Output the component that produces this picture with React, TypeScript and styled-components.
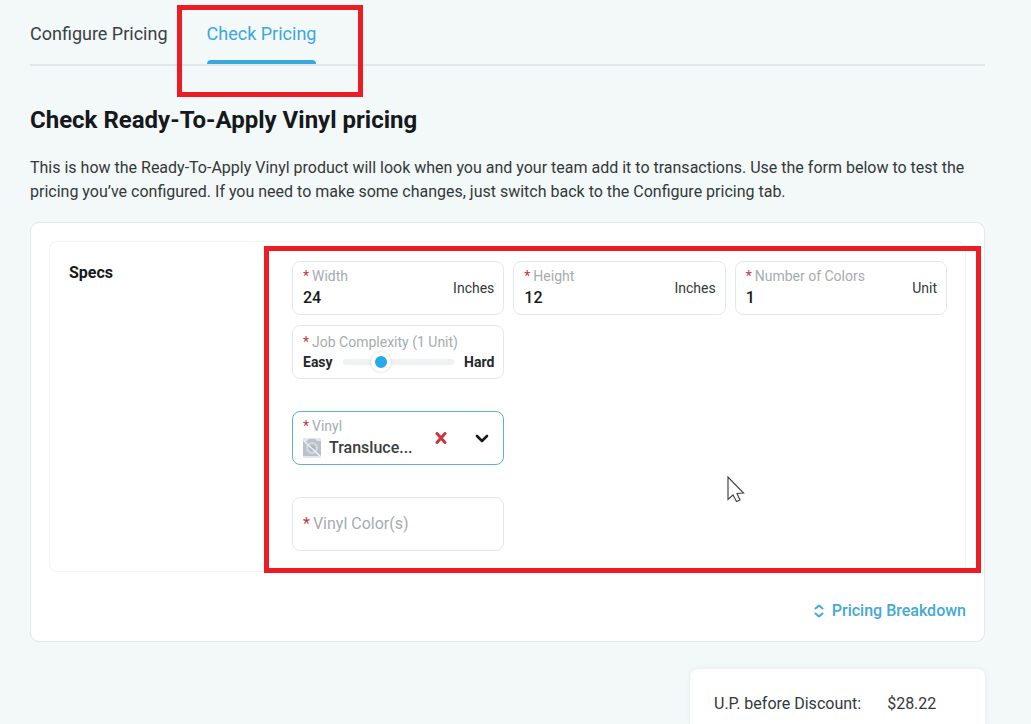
import React, { useState } from "react";
import styled, { createGlobalStyle } from "styled-components";

const GlobalStyle = createGlobalStyle`
  *, *::before, *::after { box-sizing: border-box; }
  body {
    margin: 0;
    background: #f3f8f9;
    color: #33383a;
    font-family: Roboto, "Noto Sans", sans-serif;
    font-size: 16px;
    line-height: 24px;
  }
  button, input, select { font: inherit; color: inherit; }
`;

const Page = styled.div`
  display: flex;
  flex-direction: column;
  min-height: 100vh;
  padding: 0 46px 0 30px;
`;

const Tabs = styled.nav`
  display: flex;
  gap: 39px;
  height: 66px;
  border-bottom: 2px solid #e1e6e8;
`;

const Tab = styled.button<{ $active?: boolean }>`
  position: relative;
  padding: 3px 0 0;
  border: 0;
  background: none;
  font-size: 18px;
  white-space: nowrap;
  color: ${(p) => (p.$active ? "#3aa8df" : "#3a3f42")};
  cursor: pointer;

  &::after {
    content: "";
    position: absolute;
    left: 0;
    right: 0;
    bottom: 0;
    height: 4px;
    border-radius: 4px 4px 0 0;
    background: ${(p) => (p.$active ? "#3aa8df" : "transparent")};
  }
`;

const Highlight = styled.span<{ $inset: string }>`
  position: absolute;
  z-index: 2;
  inset: ${(p) => p.$inset};
  border: 5px solid #ed1c24;
  pointer-events: none;
`;

const Title = styled.h1`
  margin: 38px 0 0;
  color: #15191b;
  font-size: 24px;
  line-height: 32px;
  font-weight: 700;
`;

const Intro = styled.p`
  margin: 20px 0 18px;
`;

const Card = styled.main`
  display: flex;
  flex-direction: column;
  padding: 18px;
  border: 1px solid #e2e9eb;
  border-radius: 9px;
  background: #fff;
`;

const SpecsPanel = styled.section`
  display: grid;
  grid-template-columns: 223px minmax(0, 1fr);
  padding: 19px 18px 20px 19px;
  border: 1px solid #f1f3f5;
  border-radius: 8px;
`;

const PanelTitle = styled.h2`
  margin: 0;
  color: #15191b;
  font-size: 16px;
  line-height: 24px;
  font-weight: 700;
`;

const Form = styled.form`
  position: relative;
  display: grid;
  grid-template-columns: repeat(3, minmax(0, 1fr));
  gap: 10px 9px;
`;

const Break = styled.div`
  grid-column: 1 / -1;
  height: 12px;
`;

const Field = styled.div<{ $active?: boolean; $newRow?: boolean }>`
  display: flex;
  align-items: center;
  height: 54px;
  padding: 0 9px 0 10px;
  border: 1px solid ${(p) => (p.$active ? "#62b3c6" : "#e3e8ea")};
  border-radius: 8px;
  background: #fff;
  ${(p) => p.$newRow && "grid-column-start: 1;"}
`;

const FieldBody = styled.div`
  display: flex;
  flex: 1;
  flex-direction: column;
  min-width: 0;
`;

const Label = styled.label<{ $large?: boolean }>`
  color: #a5acb0;
  font-size: ${(p) => (p.$large ? 16 : 14)}px;
  line-height: 20px;
  white-space: nowrap;

  &::before {
    content: "*";
    margin-right: 3px;
    color: #c0393c;
  }
`;

const TextInput = styled.input`
  width: 100%;
  min-width: 0;
  height: 24px;
  padding: 0;
  border: 0;
  outline: 0;
  background: none;
  color: #15191b;
  font-weight: 500;
`;

const Unit = styled.span`
  font-size: 14px;
`;

const SliderRow = styled.div`
  display: flex;
  align-items: center;
  gap: 10px;
  color: #24292b;
  font-size: 14px;
  line-height: 20px;
  font-weight: 700;
`;

const Slider = styled.input`
  flex: 1;
  min-width: 0;
  height: 20px;
  margin: 0;
  appearance: none;
  background: none;

  &::-webkit-slider-runnable-track {
    height: 6px;
    border-radius: 3px;
    background: #eff2f4;
  }
  &::-webkit-slider-thumb {
    appearance: none;
    width: 20px;
    height: 20px;
    margin-top: -7px;
    border: 4px solid #fff;
    border-radius: 50%;
    background: #27a9ea;
    box-shadow: 0 0 3px #c9d0d4;
  }
`;

const Choice = styled.div`
  display: flex;
  align-items: center;
  gap: 8px;

  svg { flex-shrink: 0; }
`;

const Select = styled.select`
  width: 100%;
  min-width: 0;
  height: 24px;
  padding: 0;
  border: 0;
  outline: 0;
  appearance: none;
  background: none;
  color: #393e40;
  font-weight: 500;
`;

const Actions = styled.div`
  display: flex;
  gap: 17px;
`;

const IconButton = styled.button`
  display: flex;
  align-items: center;
  justify-content: center;
  width: 24px;
  height: 32px;
  padding: 0;
  border: 0;
  background: none;
`;

const Breakdown = styled.button`
  display: flex;
  align-items: center;
  align-self: flex-end;
  gap: 8px;
  margin-top: 27px;
  padding: 0;
  border: 0;
  background: none;
  color: #43a9d5;
  font-weight: 500;
`;

const Totals = styled.aside`
  display: flex;
  flex: 1;
  align-self: flex-end;
  gap: 26px;
  width: 295px;
  margin-top: 27px;
  padding: 23px 24px 8px;
  border-radius: 8px 8px 0 0;
  background: #fff;
  box-shadow: 0 0 5px #e1e8ea;
`;

const Pointer = styled.svg`
  position: absolute;
  z-index: 3;
  top: 215px;
  left: 435px;
  pointer-events: none;
`;

function MissingImage() {
  return (
    <svg width="18" height="20" viewBox="0 0 18 20" aria-hidden="true">
      <path d="M0 0h18v20H0z" fill="#e4e8ec" />
      <path d="M0 3h4l2-2h6l2 2h4v15H0z" fill="#b9c2cc" />
      <circle cx="9" cy="10" r="5" fill="none" stroke="#dce1e6" strokeWidth="1.5" />
      <circle cx="9" cy="10" r="2.5" fill="#aab4bf" />
      <path d="M0 2l18 17" stroke="#eef1f3" strokeWidth="1.5" />
    </svg>
  );
}

interface MeasureProps {
  id: string;
  label: string;
  unit: string;
  initial: string;
}

function Measure({ id, label, unit, initial }: MeasureProps) {
  const [value, setValue] = useState(initial);
  return (
    <Field>
      <FieldBody>
        <Label htmlFor={id}>{label}</Label>
        <TextInput id={id} value={value} onChange={(e) => setValue(e.target.value)} />
      </FieldBody>
      <Unit>{unit}</Unit>
    </Field>
  );
}

export default function App() {
  return (
    <>
      <GlobalStyle />
      <Page>
        <Tabs>
          <Tab type="button">Configure Pricing</Tab>
          <Tab type="button" $active>
            Check Pricing
            <Highlight $inset="5px -47px -33px -30px" />
          </Tab>
        </Tabs>
        <Title>Check Ready-To-Apply Vinyl pricing</Title>
        <Intro>
          This is how the Ready-To-Apply Vinyl product will look when you and your team add it to
          transactions. Use the form below to test the pricing you’ve configured. If you need to
          make some changes, just switch back to the Configure pricing tab.
        </Intro>
        <Card>
          <SpecsPanel>
            <PanelTitle>Specs</PanelTitle>
            <Form>
              <Measure id="width" label="Width" unit="Inches" initial="24" />
              <Measure id="height" label="Height" unit="Inches" initial="12" />
              <Measure id="colors" label="Number of Colors" unit="Unit" initial="1" />
              <Field $newRow>
                <FieldBody>
                  <Label htmlFor="complexity">Job Complexity (1 Unit)</Label>
                  <SliderRow>
                    <span>Easy</span>
                    <Slider id="complexity" type="range" min="0" max="100" defaultValue="31" />
                    <span>Hard</span>
                  </SliderRow>
                </FieldBody>
              </Field>
              <Break />
              <Field $active $newRow>
                <FieldBody>
                  <Label htmlFor="vinyl">Vinyl</Label>
                  <Choice>
                    <MissingImage />
                    <Select id="vinyl">
                      <option>Transluce...</option>
                    </Select>
                  </Choice>
                </FieldBody>
                <Actions>
                  <IconButton type="button" aria-label="Clear vinyl">
                    <svg width="12" height="12" viewBox="0 0 12 12">
                      <path d="M2 1.5l8 9M10 1.5l-8 9" stroke="#c5383b" strokeWidth="3" strokeLinecap="round" />
                    </svg>
                  </IconButton>
                  <IconButton type="button" aria-label="Show vinyls">
                    <svg width="14" height="9" viewBox="0 0 14 9">
                      <path d="M2 2l5 5 5-5" fill="none" stroke="#15191b" strokeWidth="2.6" strokeLinecap="round" strokeLinejoin="round" />
                    </svg>
                  </IconButton>
                </Actions>
              </Field>
              <Break />
              <Field $newRow>
                <Label htmlFor="vinyl-colors" $large>Vinyl Color(s)</Label>
                <TextInput id="vinyl-colors" />
              </Field>
              <Highlight $inset="-15px -34px -22px -28px" />
              <Pointer width="18" height="27" viewBox="0 0 18 27" aria-hidden="true">
                <path d="M1 1v22.500l5-4.500 3.500 6.500 3.500-1.500-3-6.500 6.500-.5z" fill="#fff" stroke="#44484a" strokeWidth="1.200" />
              </Pointer>
            </Form>
          </SpecsPanel>
          <Breakdown type="button">
            <svg width="10" height="14" viewBox="0 0 10 14" aria-hidden="true">
              <path d="M1.500 4.500L5 1.500l3.500 3M1.500 9.500l3.500 3 3.500-3" fill="none" stroke="currentColor" strokeWidth="2" strokeLinecap="round" strokeLinejoin="round" />
            </svg>
            Pricing Breakdown
          </Breakdown>
        </Card>
        <Totals>
          <span>U.P. before Discount:</span>
          <span>$28.22</span>
        </Totals>
      </Page>
    </>
  );
}
